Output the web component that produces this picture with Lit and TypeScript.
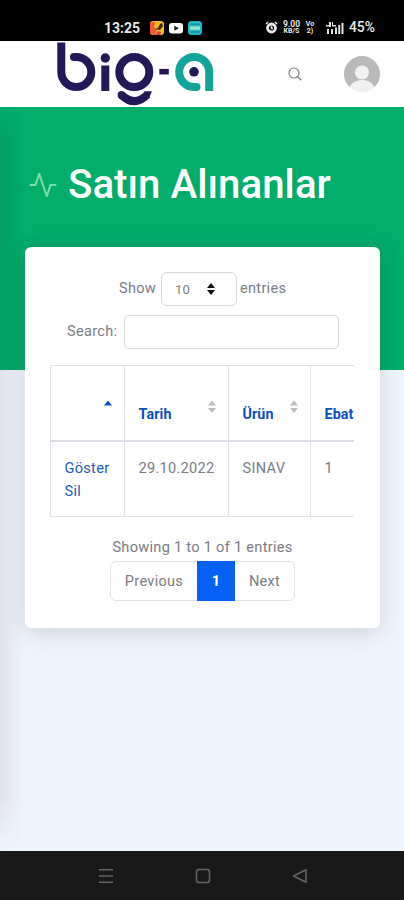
import { LitElement, html, css, svg } from "lit";
import { customElement } from "lit/decorators.js";

@customElement("status-bar")
class StatusBar extends LitElement {
  static styles = css`
    :host { display: flex; align-items: center; height: 41px; box-sizing: border-box; padding: 14px 29px 0 104px; background: #000; color: #e8e8e8; font-family: Roboto, sans-serif; }
    .time { width: 46px; font-size: 14px; font-weight: 700; line-height: 16px; white-space: nowrap; }
    .apps { display: flex; gap: 5px; align-items: center; }
    .spacer { flex: 1; }
    .alarm { margin-right: 4px; }
    .rate { width: 19px; margin-right: 4px; text-align: center; font-size: 8.5px; line-height: 7px; font-weight: 700; white-space: nowrap; }
    .rate div { height: 7px; }
    .rate div + div { font-size: 7px; }
    .vo { width: 10px; margin-right: 11px; font-size: 7px; line-height: 7px; font-weight: 700; text-align: center; }
    .signal { margin-right: 5px; }
    .battery { width: 26px; margin-top: -1px; font-size: 13.8px; line-height: 16px; font-weight: 500; white-space: nowrap; }
    svg { display: block; }
  `;
  render() {
    return html`
      <div class="time">13:25</div>
      <div class="apps">
        <svg width="14" height="14" viewBox="0 0 14 14"><rect width="14" height="14" rx="3" fill="#f5b829"/><path d="M1 1h4l-1 5 3 3-2 5H3a3 3 0 0 1-3-3V3z" fill="#ee5a35"/><path d="M12 2 10 3 8 7 5 8l5 1 3-4z" fill="#3c2515"/><path d="m5 14 3-4 3 1-1 3z" fill="#d8432c"/></svg>
        <svg width="14" height="14" viewBox="0 0 14 14"><rect y="2" width="14" height="10.5" rx="3" fill="#fff"/><path d="m5.4 4.8 4.4 2.5-4.4 2.5z" fill="#111"/></svg>
        <svg width="14" height="14" viewBox="0 0 14 14"><rect width="14" height="14" rx="3.5" fill="#20b8c5"/><path d="M2 3.2h10M2 11h10" stroke="#147f91"/><path d="M2 5.4h10v3.4H2z" fill="#8de7c8"/></svg>
      </div>
      <div class="spacer"></div>
      <svg class="alarm" width="13" height="13" viewBox="0 0 13 13" fill="none" stroke="#e8e8e8"><circle cx="6.5" cy="7" r="4" stroke-width="2.8"/><path d="m1 3 2-2M10 1l2 2M6.5 5v2.4H8" stroke-width="1.5"/></svg>
      <div class="rate"><div>9.00</div><div>KB/S</div></div>
      <div class="vo"><div>Vo</div><div>2)</div></div>
      <svg class="signal" width="18" height="14" viewBox="0 0 18 14" fill="#e2e2e2"><path d="M3 1h2v5H3zM0 4h3v1.5H0zM6 1h1v3h3v1.5H6zM1 8h2v5H1zM5 8h2v5H5zM9 6.5h2V13H9zM12.2 4h2v9h-2zM15.5 2h2v11h-2z"/></svg>
      <div class="battery">45%</div>`;
  }
}

@customElement("site-header")
class SiteHeader extends LitElement {
  static styles = css`
    :host { display: flex; align-items: center; height: 66px; background: #fff; box-sizing: border-box; padding: 0 24px 0 56px; }
    .logo { align-self: flex-start; margin-right: 74px; }
    .search { margin-right: 42px; }
    svg { display: block; flex: none; }
  `;
  render() {
    return html`
      <svg class="logo" width="158" height="66" viewBox="56 41 158 66" role="img" aria-label="big-a">
        <g fill="none" stroke="#221a58" stroke-width="8">
          <path d="M61.300 42.500V72A15 15 0 1 0 76.300 57H74"/>
          <path d="M105.300 65.500V91"/>
          <circle cx="134.300" cy="72" r="15"/>
          <path d="M121.500 95Q134.500 107.500 147.500 94.500"/>
          <path d="M159.300 71.700H168.800" stroke-width="5.600"/>
        </g>
        <g fill="#221a58">
          <circle cx="74" cy="57" r="4"/>
          <circle cx="105.300" cy="58" r="4.700"/>
          <circle cx="121.500" cy="95" r="3.900"/>
          <path d="M144 91.300H152L149 98z"/>
          <circle cx="194" cy="71.800" r="4.800"/>
        </g>
        <path d="M209.200 91V72A15 15 0 1 0 194.200 87H196.500" fill="none" stroke="#13a398" stroke-width="8"/>
        <circle cx="196.500" cy="87" r="4" fill="#13a398"/>
      </svg>
      <svg class="search" width="14" height="14" viewBox="0 0 14 14" fill="none" stroke="#888" stroke-width="1.2"><circle cx="6" cy="6" r="5"/><path d="m9.600 9.600 3.600 3.600" stroke-width="1.500"/></svg>
      <svg width="36" height="36" viewBox="0 0 36 36"><circle cx="18" cy="18" r="18" fill="#f1f1f1"/><path d="M5.500 31A18 18 0 1 1 30.500 31C28 26.500 23.500 24 18 24S8 26.500 5.500 31Z" fill="#b9b9b9"/><circle cx="18" cy="16.500" r="7" fill="#f1f1f1"/></svg>`;
  }
}

const sorter = (active: boolean) => svg`
  <path d="M0 4.500 3.500 0h1L8 4.500z" fill="${active ? "#0a50cf" : "#b8bdc6"}"/>
  ${active ? "" : svg`<path d="M0 7h8l-3.500 4.500h-1z" fill="#b8bdc6"/>`}`;

@customElement("purchases-card")
class PurchasesCard extends LitElement {
  static styles = css`
    :host { display: block; box-sizing: border-box; width: 355px; height: 381px; margin-left: 25px; padding: 25px 25px 0; background: #fff; border-radius: 6px; box-shadow: 0 4px 22px rgba(33, 40, 50, 0.17); color: #797d84; font-size: 14.6px; line-height: 23px; letter-spacing: 0.27px; }
    .row { display: flex; align-items: center; white-space: nowrap; }
    .length { height: 34px; padding-left: 69px; }
    .length > span:not(.select), .label { margin-top: -2px; }
    .show { width: 42px; }
    .select { display: flex; align-items: center; box-sizing: border-box; width: 76px; height: 34px; margin-right: 3px; padding: 0 21px 0 13px; border: 1px solid #d4d7dc; border-radius: 6px; justify-content: space-between; font-size: 13px; }
    .filter { height: 34px; margin-top: 9px; padding-left: 17px; }
    .label { width: 57px; }
    input { box-sizing: border-box; width: 215px; height: 34px; border: 1px solid #d4d7dc; border-radius: 5px; background: #fff; }
    .scroll { width: 304px; margin-top: 16px; overflow: hidden; }
    .grid { display: grid; grid-template-columns: 74px 104px 82px 90px; width: 350px; box-sizing: border-box; border-top: 1px solid #dcdfe4; }
    .cell { box-sizing: border-box; border-left: 1px solid #e0e2e6; padding: 15px 0 0 13.5px; height: 75px; border-bottom: 1px solid #e0e2e6; white-space: nowrap; }
    .head { display: flex; align-items: flex-end; justify-content: space-between; height: 76px; padding: 0 12px 14px 13.5px; border-bottom: 2px solid #d9dce3; color: #0a50c5; font-size: 14.3px; font-weight: 700; letter-spacing: 0.1px; }
    .head svg { margin-bottom: 13px; flex: none; }
    .link { display: block; color: #1c5cc0; }
    .info { margin-top: 19px; text-align: center; white-space: nowrap; }
    .pager { display: flex; box-sizing: border-box; width: 185px; height: 40px; margin: 2px 0 0 60px; line-height: 38px; text-align: center; border: 1px solid #dfe2e7; border-radius: 6px; }
    .prev { width: 86px; }
    .page { width: 38px; margin: -1px 0; line-height: 40px; background: #0761f5; color: #fff; font-weight: 700; }
    .next { flex: 1; }
    svg { display: block; }
  `;
  render() {
    const columns = ["", "Tarih", "Ürün", "Ebat"];
    return html`
      <div class="row length"><span class="show">Show</span>
        <span class="select"><span>10</span><svg width="8" height="12" viewBox="0 0 8 12" fill="#111"><path d="m0 5 4-5 4 5zM0 7h8l-4 5z"/></svg></span>
        <span>entries</span></div>
      <div class="row filter"><span class="label">Search:</span><input aria-label="Search"></div>
      <div class="scroll"><div class="grid">
        ${columns.map((c, i) => html`<div class="cell head"><span>${c}</span><svg width="8" height="12" viewBox="0 0 8 12">${sorter(i === 0)}</svg></div>`)}
        <div class="cell"><a class="link">Göster</a><a class="link">Sil</a></div>
        <div class="cell">29.10.2022</div><div class="cell">SINAV</div><div class="cell">1</div>
      </div></div>
      <div class="info">Showing 1 to 1 of 1 entries</div>
      <div class="pager"><span class="prev">Previous</span><span class="page">1</span><span class="next">Next</span></div>`;
  }
}

@customElement("nav-bar")
class NavBar extends LitElement {
  static styles = css`
    :host { display: flex; justify-content: center; gap: 81px; height: 49px; box-sizing: border-box; padding: 17px 0 0 1px; background: #191919; }
    svg { display: block; }
  `;
  render() {
    return html`
      <svg width="16" height="16" viewBox="0 0 16 16" stroke="#626262" stroke-width="1.600"><path d="M1 1.700h14M1 8h14M1 14.300h14"/></svg>
      <svg width="16" height="16" viewBox="0 0 16 16" fill="none" stroke="#626262" stroke-width="1.600"><rect x="1.500" y="1.500" width="13" height="13" rx="2.500"/></svg>
      <svg width="16" height="16" viewBox="0 0 16 16" fill="none" stroke="#626262" stroke-width="1.600" stroke-linejoin="round"><path d="M1.500 8 14 1.700v12.600z"/></svg>`;
  }
}

@customElement("app-root")
class AppRoot extends LitElement {
  static styles = css`
    :host { display: flex; flex-direction: column; width: 404px; height: 900px; overflow: hidden; font-family: Roboto, sans-serif; }
    .main { position: relative; box-sizing: border-box; height: 744px; padding-top: 51px; background: linear-gradient(#02ac69 0 263px, #f0f4fd 263px); }
    .main::after { content: ""; position: absolute; left: 0; top: 0; bottom: 0; width: 24px; background: linear-gradient(90deg, rgba(33, 40, 50, 0.08), rgba(33, 40, 50, 0.06) 30%, rgba(33, 40, 50, 0)); -webkit-mask: linear-gradient(transparent, #000 30px, #000 calc(100% - 50px), transparent); mask: linear-gradient(transparent, #000 30px, #000 calc(100% - 50px), transparent); }
    .title { display: flex; align-items: center; height: 54px; margin: 0 0 35px; padding-left: 28px; color: #fff; font-size: 40.3px; font-weight: 500; line-height: 54px; white-space: nowrap; }
    .title svg { margin-right: 10px; flex: none; }
  `;
  render() {
    return html`
      <status-bar></status-bar>
      <site-header></site-header>
      <div class="main">
        <h1 class="title"><svg width="30" height="30" viewBox="0 0 24 24" fill="none" stroke="#75dbae" stroke-width="1.700" stroke-linecap="round" stroke-linejoin="round"><path d="M22 12h-4l-3 9L9 3l-3 9H2"/></svg><span>Satın Alınanlar</span></h1>
        <purchases-card></purchases-card>
      </div>
      <nav-bar></nav-bar>`;
  }
}
